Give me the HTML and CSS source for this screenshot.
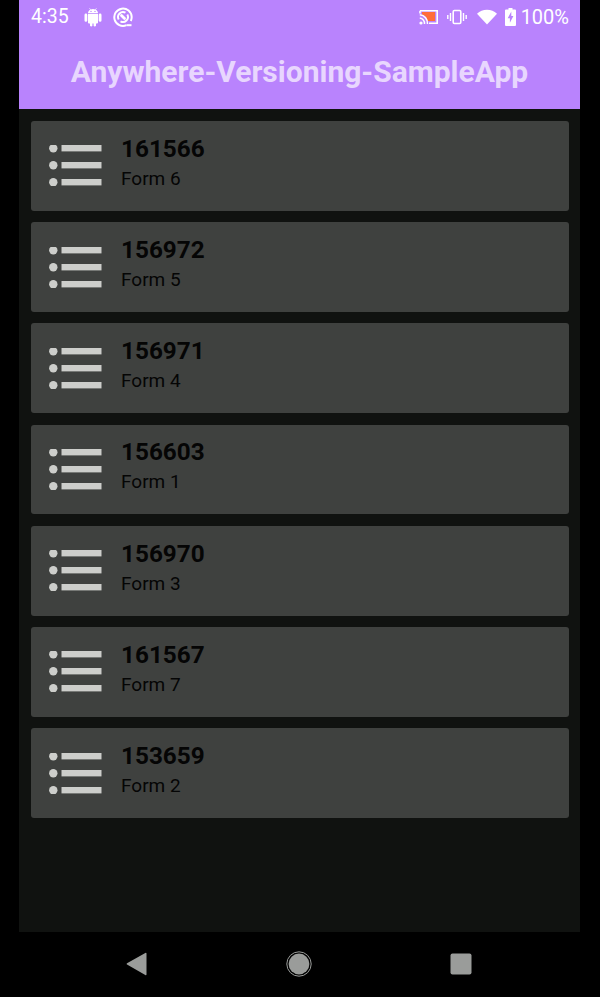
FILE: index.html
```html
<!DOCTYPE html>
<html lang="en">
<head>
    <meta charset="UTF-8">
    <meta name="viewport" content="width=device-width, initial-scale=1.0">
    <title>Anywhere-Versioning-SampleApp</title>
    <link rel="stylesheet" href="styles.css">
</head>
<body>
    <div class="screen">
        <div class="app-bar">
            <div class="status-bar">
                <span class="clock">4:35</span>
                <svg class="icon-android" width="20" height="20" viewBox="0 0 20 20">
                    <path fill="#fff" d="M1.500 8a1.400 1.400 0 0 1 2.800 0v5.400a1.400 1.400 0 0 1-2.800 0zM15.700 8a1.400 1.400 0 0 1 2.800 0v5.400a1.400 1.400 0 0 1-2.800 0zM5 7h10v8.500a1 1 0 0 1-1 1h-1v2.200a1.300 1.300 0 0 1-2.400 0v-2.200H9.400v2.200a1.300 1.300 0 0 1-2.400 0v-2.200H6a1 1 0 0 1-1-1zM5 6.200c.1-1.700.9-2.800 2.200-3.500L6.300 1.300l.4-.3 1 1.400a5.800 5.800 0 0 1 4.600 0l1-1.400.4.300-.9 1.400c1.300.7 2.100 1.800 2.200 3.500z"/>
                    <circle cx="8" cy="4.400" r=".7" fill="#b983fd"/>
                    <circle cx="12" cy="4.400" r=".7" fill="#b983fd"/>
                </svg>
                <svg class="icon-sync" width="20" height="20" viewBox="0 0 20 20" fill="none" stroke="#fff">
                    <path stroke-width="2" d="M13.500 18.200A8.700 8.700 0 1 1 18.700 10c0 1.400-.3 2.800-.9 4"/>
                    <path stroke-width="2" d="M5.700 12.500A5 5 0 0 1 12.500 5.700M14.300 7.500A5 5 0 0 1 7.500 14.300"/>
                    <path stroke-width="2.800" stroke-linecap="round" d="M8.500 8.500l3 3"/>
                    <path stroke-width="2" d="M13.500 18.200h5"/>
                </svg>
                <span class="status-spacer"></span>
                <svg class="icon-cast" width="20" height="16" viewBox="0 0 20 16">
                    <path fill="#ff6d3a" d="M3 3h13v9H8.500C8 8 6 6 3 5.500z"/>
                    <path fill="none" stroke="#fff" stroke-width="1.600" d="M1 1.800h17.200v12.400H10M1 4.500V1.800"/>
                    <path fill="none" stroke="#fff" stroke-width="1.500" d="M.800 5.800A8.500 8.500 0 0 1 8.500 15M.800 9A5.500 5.500 0 0 1 5.500 15"/>
                    <circle cx="2" cy="14" r="1.600" fill="#fff"/>
                </svg>
                <svg class="icon-vibrate" width="20" height="16" viewBox="0 0 20 16" fill="none" stroke="#fff">
                    <rect x="6.200" y="1.500" width="7.600" height="13" rx="1.200" stroke-width="1.600"/>
                    <path stroke-width="1.400" d="M3.500 4v8M16.500 4v8M.800 6v4M19.200 6v4"/>
                </svg>
                <svg class="icon-wifi" width="20" height="16" viewBox="0 0 20 15">
                    <path fill="#fff" d="M0 4.300C2.700 1.700 6.200.200 10 .200s7.300 1.500 10 4.100L10 15z"/>
                </svg>
                <svg class="icon-battery" width="11" height="18" viewBox="0 0 11 18">
                    <path fill="#fff" d="M3.500 0h4v1.500H10a1 1 0 0 1 1 1V17a1 1 0 0 1-1 1H1a1 1 0 0 1-1-1V2.500a1 1 0 0 1 1-1h2.500z"/>
                    <path fill="#b983fd" d="M6.300 3.500 2.700 10.300h2.200v4.400l3.500-6.800H6.300z"/>
                </svg>
                <span class="battery-level">100%</span>
            </div>
            <h1 class="app-title">Anywhere-Versioning-SampleApp</h1>
        </div>

        <div class="form-list">
            <div class="form-card">
                <svg class="list-icon" viewBox="0 0 54 41"><use href="#list-glyph"/></svg>
                <div class="form-text">
                    <div class="form-id">161566</div>
                    <div class="form-name">Form 6</div>
                </div>
            </div>
            <div class="form-card">
                <svg class="list-icon" viewBox="0 0 54 41"><use href="#list-glyph"/></svg>
                <div class="form-text">
                    <div class="form-id">156972</div>
                    <div class="form-name">Form 5</div>
                </div>
            </div>
            <div class="form-card">
                <svg class="list-icon" viewBox="0 0 54 41"><use href="#list-glyph"/></svg>
                <div class="form-text">
                    <div class="form-id">156971</div>
                    <div class="form-name">Form 4</div>
                </div>
            </div>
            <div class="form-card">
                <svg class="list-icon" viewBox="0 0 54 41"><use href="#list-glyph"/></svg>
                <div class="form-text">
                    <div class="form-id">156603</div>
                    <div class="form-name">Form 1</div>
                </div>
            </div>
            <div class="form-card">
                <svg class="list-icon" viewBox="0 0 54 41"><use href="#list-glyph"/></svg>
                <div class="form-text">
                    <div class="form-id">156970</div>
                    <div class="form-name">Form 3</div>
                </div>
            </div>
            <div class="form-card">
                <svg class="list-icon" viewBox="0 0 54 41"><use href="#list-glyph"/></svg>
                <div class="form-text">
                    <div class="form-id">161567</div>
                    <div class="form-name">Form 7</div>
                </div>
            </div>
            <div class="form-card">
                <svg class="list-icon" viewBox="0 0 54 41"><use href="#list-glyph"/></svg>
                <div class="form-text">
                    <div class="form-id">153659</div>
                    <div class="form-name">Form 2</div>
                </div>
            </div>
        </div>
    </div>

    <div class="nav-bar">
        <svg width="22" height="24" viewBox="0 0 22 24">
            <path fill="#9a9c9a" d="M20.500 1.500v21a.8.8 0 0 1-1.200.6L1 12.600a.8.8 0 0 1 0-1.300L19.300.900a.8.8 0 0 1 1.200.6z"/>
        </svg>
        <svg width="26" height="26" viewBox="0 0 26 26">
            <circle cx="13" cy="13" r="12.200" fill="none" stroke="#9a9c9a" stroke-width="1"/>
            <circle cx="13" cy="13" r="10.400" fill="#9a9c9a"/>
        </svg>
        <svg width="22" height="22" viewBox="0 0 22 22">
            <rect x=".5" y=".5" width="21" height="21" rx="2" fill="#9a9c9a"/>
        </svg>
    </div>

    <svg class="glyph-defs" width="0" height="0">
        <symbol id="list-glyph" viewBox="0 0 54 41">
            <g fill="#cdcecb">
                <circle cx="4.300" cy="3.300" r="4.200"/>
                <circle cx="4.300" cy="20.300" r="4.200"/>
                <circle cx="4.300" cy="37.300" r="4.200"/>
                <rect x="12.500" y="0" width="40" height="6.400"/>
                <rect x="12.500" y="17" width="40" height="6.400"/>
                <rect x="12.500" y="34" width="40" height="6.400"/>
            </g>
        </symbol>
    </svg>
</body>
</html>
```
FILE: styles.css
```css
body {
    margin: 0;
    height: 997px;
    overflow: hidden;
    display: flex;
    flex-direction: column;
    background-color: #000;
    font-family: Roboto, "Liberation Sans", sans-serif;
}

.screen {
    width: 561px;
    height: 932px;
    margin-left: 19px;
    display: flex;
    flex-direction: column;
    background-color: #101210;
}

.app-bar {
    height: 109px;
    flex-shrink: 0;
    background-color: #b983fd;
}

.status-bar {
    height: 33px;
    display: flex;
    align-items: center;
    padding: 0 11px 0 12px;
    color: #fff;
    font-size: 19.5px;
}

.icon-android {
    margin-left: 14px;
}

.icon-sync {
    margin-left: 10px;
}

.status-spacer {
    flex: 1;
}

.icon-vibrate {
    margin-left: 8px;
}

.icon-wifi {
    margin-left: 10px;
}

.icon-battery {
    margin-left: 8px;
}

.battery-level {
    margin-left: 5px;
    font-size: 20px;
}

.app-title {
    margin: 4px 0 0;
    height: 70px;
    text-align: center;
    color: #e8d6fe;
    font-size: 30px;
    font-weight: 700;
    line-height: 70px;
}

.form-list {
    display: flex;
    flex-direction: column;
    gap: 11.4px;
    padding: 12px 11px 12px 12px;
}

.form-card {
    height: 89.8px;
    display: flex;
    align-items: center;
    padding-left: 18px;
    border-radius: 3px;
    background-color: #3f413f;
}

.list-icon {
    width: 54px;
    height: 41px;
    flex-shrink: 0;
}

.form-text {
    margin-left: 18px;
    margin-bottom: 4px;
}

.form-id {
    margin-bottom: 2px;
    color: #050505;
    font-size: 24.3px;
    font-weight: 700;
    line-height: 28px;
}

.form-name {
    color: #050505;
    font-size: 19px;
    line-height: 28px;
}

.nav-bar {
    flex: 1;
    display: flex;
    align-items: center;
    justify-content: space-between;
    padding: 0 128px 1px 126px;
}

.glyph-defs {
    position: absolute;
}
```
